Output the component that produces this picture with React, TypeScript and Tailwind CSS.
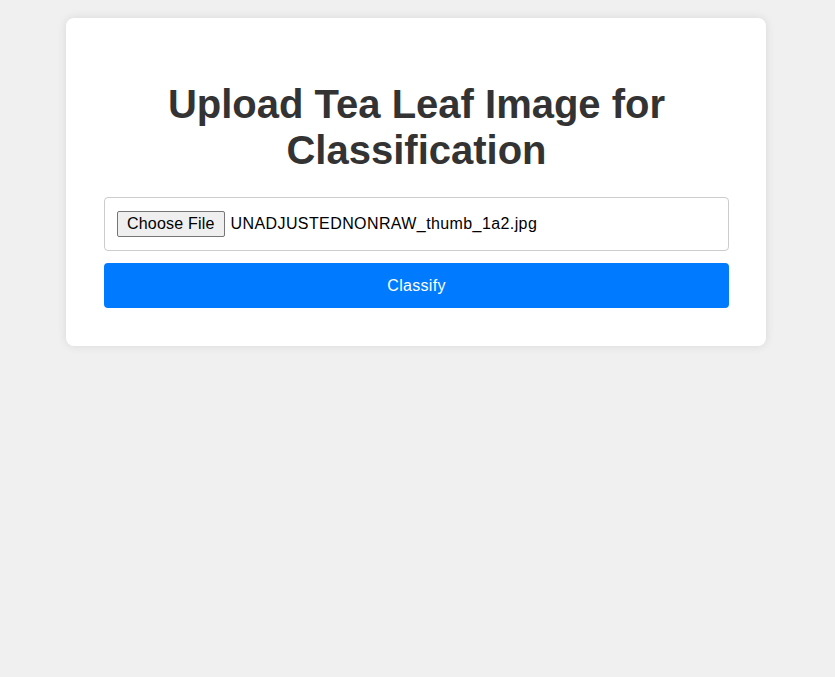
import React from "react";

export default function App() {
  return (
    <div
      className="min-h-[677px] w-full bg-[#f0f0f0] pt-[18px]"
      style={{ fontFamily: '"Liberation Sans", Arial, sans-serif' }}
    >
      <div className="ml-[66px] w-[700px] rounded-lg bg-white pl-[38px] pr-[37px] pt-[36px] pb-[38px] shadow-[0_0_10px_rgba(0,0,0,0.1)]">
        <h1 className="mt-[27px] mb-[24px] text-center text-[40px] font-bold leading-[46px] text-[#333]">
          Upload Tea Leaf Image for Classification
        </h1>
        <div className="flex h-[54px] items-center rounded border border-[#ccc] px-[12px]">
          <button className="h-[26px] rounded-[2px] border border-[#767676] bg-[#efefef] px-[9px] text-[16px] leading-[20px] tracking-[0.2px] text-black">
            Choose File
          </button>
          <span className="ml-[6px] text-[16px] tracking-[0.4px] text-black">UNADJUSTEDNONRAW_thumb_1a2.jpg</span>
        </div>
        <button className="mt-[12px] h-[45px] w-full rounded bg-[#007bff] text-[16px] tracking-[0.3px] text-white">
          Classify
        </button>
      </div>
    </div>
  );
}
